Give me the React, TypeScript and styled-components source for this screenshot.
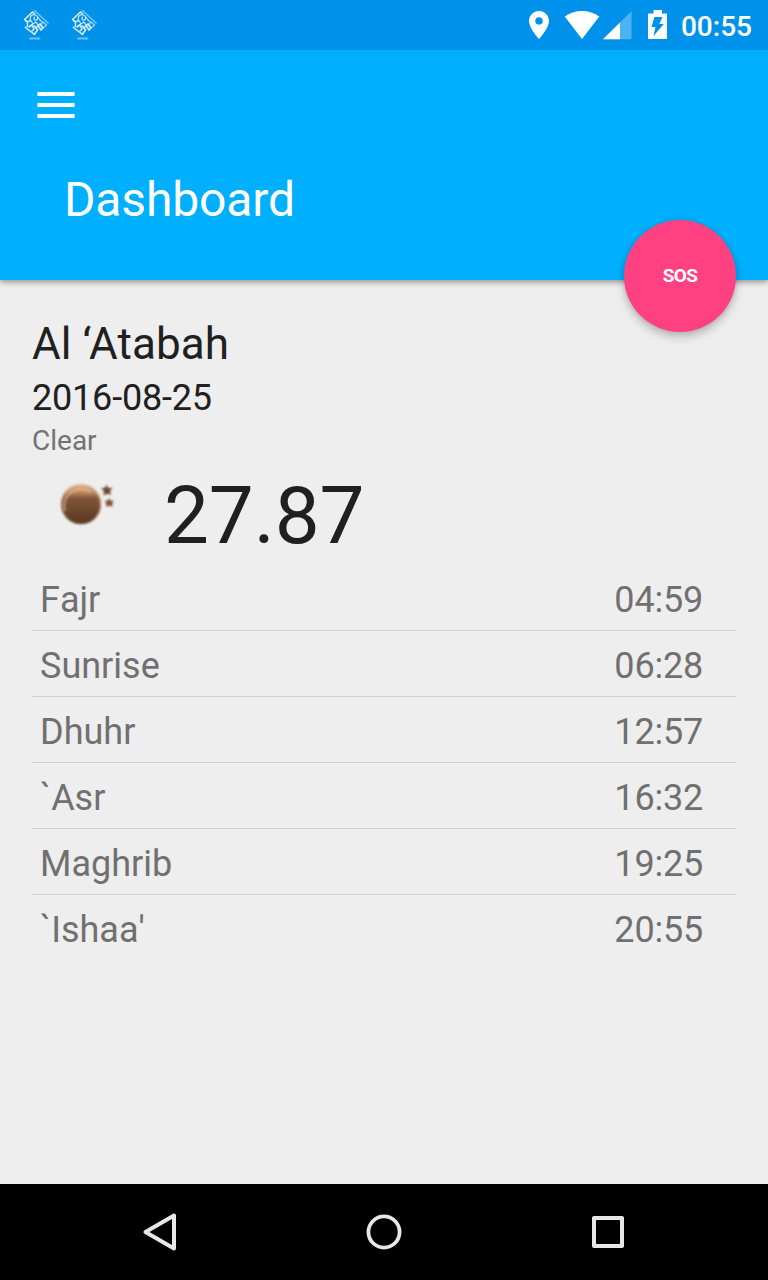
import React from 'react';
import styled, { createGlobalStyle } from 'styled-components';

const GlobalStyle = createGlobalStyle`
  body { margin: 0; background: #eeeeee; font-family: Roboto, sans-serif; }
  * { box-sizing: border-box; }
  svg { display: block; flex: none; }
`;

const Screen = styled.div`
  width: 768px;
  height: 1280px;
  display: flex;
  flex-direction: column;
  overflow: hidden;
  background: #eeeeee;
`;

const StatusBar = styled.div`
  position: relative;
  z-index: 1;
  height: 50px;
  flex: none;
  display: flex;
  justify-content: space-between;
  background: #0091ea;
`;

const Notifications = styled.div`
  display: flex;
  gap: 20px;
  padding: 9px 0 0 22px;
`;

const SystemIcons = styled.div`
  display: flex;
  padding-right: 16px;
`;

const Clock = styled.span`
  margin-left: 13px;
  font-size: 28px;
  font-weight: 500;
  line-height: 53px;
  color: #fff;
`;

const Header = styled.header`
  position: relative;
  height: 230px;
  flex: none;
  padding: 42px 37px 0;
  background: #00b0ff;
  box-shadow: 0 2px 6px rgba(0, 0, 0, 0.4);
`;

const Title = styled.h1`
  margin: 53px 0 0 27px;
  font-size: 48px;
  font-weight: 400;
  line-height: 56px;
  letter-spacing: -0.15px;
  color: #fff;
`;

const SosButton = styled.button`
  position: absolute;
  right: 32px;
  bottom: -52px;
  width: 112px;
  height: 112px;
  padding: 0;
  border: 0;
  border-radius: 50%;
  background: #ff4081;
  box-shadow: 0 5px 10px rgba(0, 0, 0, 0.22), 0 0 5px rgba(0, 0, 0, 0.12);
  color: #fff;
  font: 700 19px/112px Roboto, sans-serif;
  letter-spacing: -0.6px;
`;

const Main = styled.main`
  flex: 1;
  padding: 38px 32px 0;
  color: #202020;
`;

const Place = styled.div`
  font-size: 44px;
  line-height: 52px;
  letter-spacing: 0.1px;
`;

const DateText = styled.div`
  margin-top: 7px;
  font-size: 36px;
  line-height: 42px;
  letter-spacing: -0.2px;
`;

const Condition = styled.div`
  margin-top: 6px;
  font-size: 28px;
  line-height: 32px;
  color: #737373;
`;

const Weather = styled.div`
  display: flex;
  height: 97px;
  padding: 12px 0 0 24px;
`;

const MoonSlot = styled.div`
  padding-top: 12px;
`;

const Temperature = styled.div`
  margin-left: 46px;
  font-size: 80px;
  line-height: 94px;
  letter-spacing: -0.1px;
`;

const Times = styled.ul`
  margin: 11px 0 0;
  padding: 0;
  list-style: none;
`;

const TimeRow = styled.li`
  display: flex;
  justify-content: space-between;
  height: 66px;
  padding: 2px 33px 0 8px;
  border-bottom: 1px solid #cecece;
  font-size: 36px;
  line-height: 66px;
  color: #707070;
  &:last-child { border-bottom-color: transparent; }
`;

const Name = styled.span`
  font-kerning: none;
`;

const Time = styled.span`
  letter-spacing: -0.2px;
`;

const NavBar = styled.nav`
  height: 96px;
  flex: none;
  display: flex;
  align-items: center;
  justify-content: center;
  gap: 176px;
  background: #000;
`;

const BrandIcon = () => (
  <svg width="28" height="34" viewBox="0 0 28 34" fill="none" stroke="#fff" strokeLinecap="round">
    <path d="M12.5 1.5 26 14" strokeWidth="1.4" opacity=".5" strokeDasharray="2 .8" />
    <path d="M2.500 10.500 10.500 3l2 1.500M2.500 10.500c2 2.500 4.500 3 5.500 1M5.500 12c-1.500 2.500 1 4 0 5L3.500 18.500l9 7" strokeWidth="1.400" opacity=".85" />
    <path d="M8 10c0-3.500 3-5 5.500-4s3 4 1 5-3-1.500-2-3M8 10l3 5 3-2 2.500 4M8 17l3-2" strokeWidth="1.200" opacity=".8" />
    <path d="M15.500 8l5 5.500-2 3M21 13l3.500 3-3 2.500" strokeWidth="1.200" opacity=".65" />
    <path d="M7 18l3-2 2 4-2 2M12.500 17l3 4-3 4M15 18l3-3 3 4-2 2-2-3" strokeWidth="1.600" opacity=".85" />
    <path d="M8 29.500h3M12.500 29.500h5" strokeWidth="2" opacity=".45" />
  </svg>
);

const StatusIcons = () => (
  <svg width="140" height="50" viewBox="528 0 140 50" fill="#fff">
    <path fillRule="evenodd" d="M539 11c-5.600 0-10 4.400-10 10 0 7.300 10 18 10 18s10-10.700 10-18c0-5.600-4.400-10-10-10Zm0 6.200a3.700 3.700 0 1 1 0 7.400 3.700 3.700 0 0 1 0-7.400Z" />
    <path d="M564.700 16.500C569.500 13 575.500 11 582 11s12.500 2 17.300 5.500L582 39Z" />
    <path d="M603 39.300 631.500 11v28.300Z" opacity=".3" />
    <path d="M603 39.300 620 22.500v16.800Z" />
    <path d="M653.500 10h8.500v3.500h5V39h-19V13.500h5.500Z" />
    <path d="M654.300 17h8.200l-3.200 7h4.500l-10.300 12 2-9h-4Z" fill="#0091ea" />
  </svg>
);

const MenuIcon = () => (
  <svg width="38" height="27" viewBox="0 0 38 27" fill="#fff">
    <path d="M.4 0h37.200v4H.4zM.4 11h37.200v4H.4zM.4 22h37.200v4H.4z" />
  </svg>
);

const MoonIcon = () => (
  <svg width="62" height="46" viewBox="56 481 62 46">
    <defs>
      <linearGradient id="moon" x1="0" y1="0" x2="0" y2="1">
        <stop offset="0" stopColor="#e0b48e" />
        <stop offset=".2" stopColor="#c08a61" />
        <stop offset=".36" stopColor="#805438" />
        <stop offset="1" stopColor="#583820" />
      </linearGradient>
      <linearGradient id="rim" x1="0" y1="0" x2="0" y2="1">
        <stop offset="0" stopColor="#e8c4a5" />
        <stop offset=".55" stopColor="#ad7853" />
        <stop offset="1" stopColor="#65452e" />
      </linearGradient>
      <filter id="soft"><feGaussianBlur stdDeviation=".8" /></filter>
    </defs>
    <g filter="url(#soft)">
      <circle cx="81" cy="504" r="20" fill="url(#moon)" />
      <circle cx="81" cy="504" r="19.400" fill="none" stroke="url(#rim)" strokeWidth="1.500" />
      <path d="M65 511c-3-10 3-20 13-21.500 5-.7 9 0 13 2.500" fill="none" stroke="#edceb5" strokeWidth="1.600" opacity=".65" />
      <path d="m106.500 484.500 1.700 3.400 4.300-.2-2.500 3.300 1.200 3.800-3.900-1.100-4 1.600.8-4.100-3-3 4-.4Z" fill="#704730" />
      <path d="m109 498 1.500 2.700 3.500.1-2 2.900.8 3-3.500-1-3.500 1 .7-3.200-2-2.600 3.300-.2Z" fill="#7d5036" />
    </g>
  </svg>
);

const prayers = [
  ['Fajr', '04:59'],
  ['Sunrise', '06:28'],
  ['Dhuhr', '12:57'],
  ['`Asr', '16:32'],
  ['Maghrib', '19:25'],
  ["`Ishaa'", '20:55'],
];

export default function App() {
  return (
    <Screen>
      <GlobalStyle />
      <StatusBar>
        <Notifications><BrandIcon /><BrandIcon /></Notifications>
        <SystemIcons><StatusIcons /><Clock>00:55</Clock></SystemIcons>
      </StatusBar>
      <Header>
        <MenuIcon />
        <Title>Dashboard</Title>
        <SosButton>SOS</SosButton>
      </Header>
      <Main>
        <Place>Al ‘Atabah</Place>
        <DateText>2016-08-25</DateText>
        <Condition>Clear</Condition>
        <Weather>
          <MoonSlot><MoonIcon /></MoonSlot>
          <Temperature>27.87</Temperature>
        </Weather>
        <Times>
          {prayers.map(([name, time]) => (
            <TimeRow key={name}><Name>{name}</Name><Time>{time}</Time></TimeRow>
          ))}
        </Times>
      </Main>
      <NavBar>
        <svg width="48" height="48" viewBox="136 1208 48 48" fill="none" stroke="#e7e7e7" strokeWidth="4" strokeLinejoin="round">
          <path d="M145.500 1232 174 1215.500v33Z" />
        </svg>
        <svg width="48" height="48" viewBox="0 0 48 48" fill="none" stroke="#e7e7e7" strokeWidth="3.800">
          <circle cx="24" cy="24" r="15.600" />
        </svg>
        <svg width="48" height="48" viewBox="0 0 48 48" fill="none" stroke="#e7e7e7" strokeWidth="4" strokeLinejoin="round">
          <rect x="10" y="10" width="28" height="28" />
        </svg>
      </NavBar>
    </Screen>
  );
}
